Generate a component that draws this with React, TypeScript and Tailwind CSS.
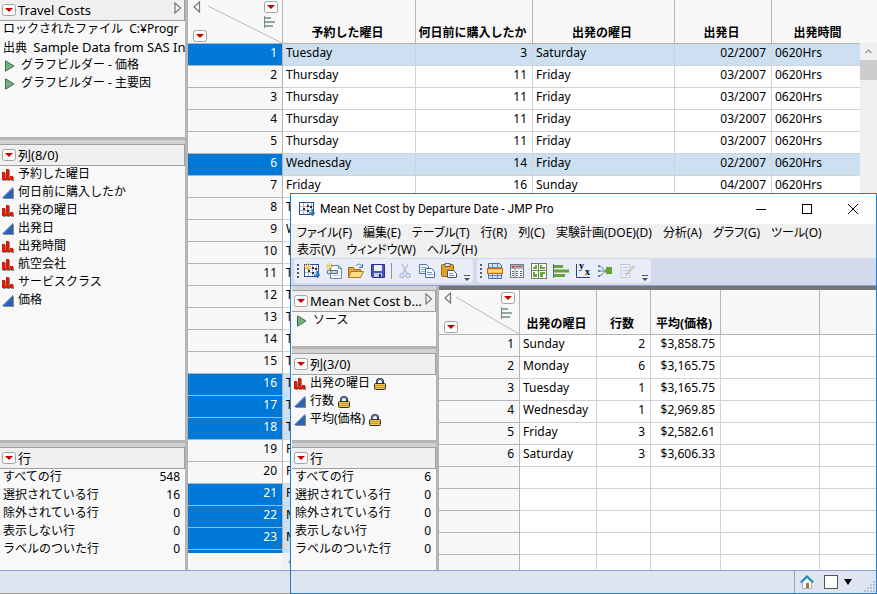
import { ReactNode } from "react";
import clsx from "clsx";

type Column = { name: string; kind: "nominal" | "continuous"; locked?: boolean };
type Stat = { label: string; value: number };

const tripColumns: Column[] = [
  { name: "予約した曜日", kind: "nominal" },
  { name: "何日前に購入したか", kind: "continuous" },
  { name: "出発の曜日", kind: "nominal" },
  { name: "出発日", kind: "continuous" },
  { name: "出発時間", kind: "nominal" },
  { name: "航空会社", kind: "nominal" },
  { name: "サービスクラス", kind: "nominal" },
  { name: "価格", kind: "continuous" },
];

const summaryColumns: Column[] = [
  { name: "出発の曜日", kind: "nominal", locked: true },
  { name: "行数", kind: "continuous", locked: true },
  { name: "平均(価格)", kind: "continuous", locked: true },
];

const tripStats: Stat[] = [
  { label: "すべての行", value: 548 },
  { label: "選択されている行", value: 16 },
  { label: "除外されている行", value: 0 },
  { label: "表示しない行", value: 0 },
  { label: "ラベルのついた行", value: 0 },
];

const summaryStats: Stat[] = [
  { label: "すべての行", value: 6 },
  { label: "選択されている行", value: 0 },
  { label: "除外されている行", value: 0 },
  { label: "表示しない行", value: 0 },
  { label: "ラベルのついた行", value: 0 },
];

const trips = [
  ["Tuesday", "3", "Saturday", "02/2007", "0620Hrs"],
  ["Thursday", "11", "Friday", "03/2007", "0620Hrs"],
  ["Thursday", "11", "Friday", "03/2007", "0620Hrs"],
  ["Thursday", "11", "Friday", "03/2007", "0620Hrs"],
  ["Thursday", "11", "Friday", "03/2007", "0620Hrs"],
  ["Wednesday", "14", "Friday", "02/2007", "0620Hrs"],
  ["Friday", "16", "Sunday", "04/2007", "0620Hrs"],
  ["Thursday"],
  ["Wednesday"],
  ["Thursday"],
  ["Thursday"],
  ["Thursday"],
  ["Thursday"],
  ["Thursday"],
  ["Thursday"],
  ["Thursday"],
  ["Thursday"],
  ["Thursday"],
  ["Friday"],
  ["Friday"],
  ["Friday"],
  ["Monday"],
  ["Monday"],
  [],
];
const selectedRows = [1, 6, 16, 17, 18, 21, 22, 23, 24];

const summary = [
  ["Sunday", "2", "$3,858.75"],
  ["Monday", "6", "$3,165.75"],
  ["Tuesday", "1", "$3,165.75"],
  ["Wednesday", "1", "$2,969.85"],
  ["Friday", "3", "$2,582.61"],
  ["Saturday", "3", "$3,606.33"],
  [],
  [],
  [],
  [],
  [],
];

const menus = [
  ["ファイル(F)", "編集(E)", "テーブル(T)", "行(R)", "列(C)", "実験計画(DOE)(D)", "分析(A)", "グラフ(G)", "ツール(O)"],
  ["表示(V)", "ウィンドウ(W)", "ヘルプ(H)"],
];

function RedMenu({ label }: { label: string }) {
  return (
    <button aria-label={label} className="block shrink-0">
      <svg width="14" height="12" viewBox="0 0 14 12">
        <rect x="0.5" y="0.5" width="13" height="11" rx="2" fill="#fbfbfb" stroke="#a3a3a3" />
        <path d="M3 4h8L7 8z" fill="#c80000" />
      </svg>
    </button>
  );
}

function Arrow({ side }: { side: "left" | "right" }) {
  return (
    <svg width="8" height="12" viewBox="0 0 8 12" className="shrink-0">
      <path d={side === "left" ? "M6.500 1v10L1 6z" : "M1 1v10l5.500-5z"} fill="#fafafa" stroke="#777" strokeWidth="1.200" />
    </svg>
  );
}

function Play() {
  return (
    <svg width="10" height="12" viewBox="0 0 10 12" className="mt-1 shrink-0">
      <path d="M.5.8v10.400L9 6z" fill="#76b082" stroke="#3f7048" />
    </svg>
  );
}

function KindIcon({ kind }: { kind: Column["kind"] }) {
  return (
    <svg width="12" height="12" viewBox="0 0 12 12" className="mt-1 shrink-0">
      {kind === "nominal" ? (
        <>
          <path d="M1 4h3v8H1zM5 1h3v11H5zM9 8h3v4H9z" fill="#8a8a8a" />
          <path d="M0 3h3v8H0zM4 0h3v11H4zM8 7h3v4H8z" fill="#d81e05" />
          <path d="M0 9h11v2H0z" fill="#d81e05" />
        </>
      ) : (
        <>
          <path d="M1 12h11V1z" fill="#8a8a8a" />
          <path d="M0 11h11V0z" fill="#2a62b4" />
          <path d="M1 10.500L11 .5" stroke="#6fa0dc" />
        </>
      )}
    </svg>
  );
}

function Lock() {
  return (
    <svg width="12" height="12" viewBox="0 0 12 12" className="mt-1 shrink-0">
      <path d="M3 6V3.500a3 2.500 0 0 1 6 0V6" fill="none" stroke="#22335c" strokeWidth="2" />
      <path d="M3.200 5V3.500a2.800 2.300 0 0 1 5.600 0" fill="none" stroke="#a9b6d0" strokeWidth="0.600" />
      <rect x="0.500" y="5.500" width="11" height="6" rx="1" fill="#f6c848" stroke="#2c2c38" />
      <path d="M1 7.500h10M1 9.500h10" stroke="#b8841c" strokeWidth="0.700" />
    </svg>
  );
}

function RowsIcon() {
  return (
    <svg width="12" height="12" viewBox="0 0 12 12" shapeRendering="crispEdges">
      <path d="M0 0h1v12H0z" fill="#7e8a9c" />
      <path d="M1 1h6v2H1zM1 5h10v2H1zM1 9h8v2H1z" fill="#90a898" />
    </svg>
  );
}

function PanelHeader({ title, arrow }: { title: string; arrow?: boolean }) {
  return (
    <div className="flex h-[22px] shrink-0 items-center border border-l-0 border-[#a0a0a0] bg-[#f0f0f0] pl-0.5 pr-0.5">
      <RedMenu label={`${title} メニュー`} />
      <h2 className="ml-0.5 grow whitespace-nowrap text-[13px] leading-5">{title}</h2>
      {arrow && (
        <button aria-label="パネルを閉じる" className="mb-1">
          <Arrow side="right" />
        </button>
      )}
    </div>
  );
}

function Splitter() {
  return <div className="h-[7px] shrink-0 border-t-[3px] border-[#b4b4b4] bg-[#d2d2d2]" />;
}

function ColumnList({ columns }: { columns: Column[] }) {
  return (
    <ul className="-mt-px">
      {columns.map((column) => (
        <li key={column.name} className="flex h-[18px] gap-1 pl-0.5 leading-[18px]">
          <KindIcon kind={column.kind} />
          <span className="whitespace-nowrap">{column.name}</span>
          {column.locked && <Lock />}
        </li>
      ))}
    </ul>
  );
}

function Stats({ stats }: { stats: Stat[] }) {
  return (
    <dl className="-mt-px">
      {stats.map((stat) => (
        <div key={stat.label} className="flex h-[18px] justify-between pl-[3px] pr-[5px] leading-[18px]">
          <dt>{stat.label}</dt>
          <dd>{stat.value}</dd>
        </div>
      ))}
    </dl>
  );
}

function Corner() {
  return (
    <div className="relative flex h-11 justify-between pb-px pl-[5px] pr-1 pt-0.5">
      <svg className="absolute inset-0 h-full w-full" viewBox="0 0 80 44" preserveAspectRatio="none">
        <path d="M17 7L80 44" stroke="#b8b8b8" vectorEffect="non-scaling-stroke" />
      </svg>
      <div className="relative flex flex-col justify-between">
        <Arrow side="left" />
        <RedMenu label="行メニュー" />
      </div>
      <div className="relative flex flex-col gap-[3px]">
        <RedMenu label="列メニュー" />
        <RowsIcon />
      </div>
    </div>
  );
}

type GridProps = {
  widths: string[];
  heads: string[];
  rows: string[][];
  right: number[];
  selected?: number[];
};

function DataGrid({ widths, heads, rows, right, selected = [] }: GridProps) {
  return (
    <table className="w-full table-fixed border-separate border-spacing-0">
      <colgroup>
        {widths.map((width, i) => (
          <col key={i} className={width} />
        ))}
      </colgroup>
      <thead>
        <tr className="bg-[#f7f7f7]">
          <td className="border-b border-r border-[#b4b4b4] p-0">
            <Corner />
          </td>
          {heads.map((head, i) => (
            <th
              key={i}
              className="whitespace-nowrap border-b border-r border-[#b4b4b4] p-0 pb-px pr-[3px] align-bottom font-bold leading-[18px] last:border-r-0 last:pl-[3px] last:pr-0"
            >
              {head}
            </th>
          ))}
        </tr>
      </thead>
      <tbody>
        {rows.map((row, i) => {
          const on = selected.includes(i + 1);
          const filled = row.length > 0;
          return (
            <tr key={i} className={on ? "bg-[#cce0f1]" : "bg-white"}>
              <th
                className={clsx(
                  "h-[22px] border-b border-r border-[#b4b4b4] p-0 pr-[5px] text-right align-top font-normal leading-[18px]",
                  on ? "bg-[#0078d7] text-white" : "bg-[#f7f7f7]"
                )}
              >
                {filled && i + 1}
              </th>
              {heads.map((_, c) => (
                <td
                  key={c}
                  className={clsx(
                    "h-[22px] whitespace-nowrap border-b border-r border-[#d2d2da] p-0 align-top leading-[18px] last:border-r-0",
                    right.includes(c) ? "pr-[5px] text-right" : "pl-[3px]"
                  )}
                >
                  {row[c]}
                </td>
              ))}
            </tr>
          );
        })}
      </tbody>
    </table>
  );
}

function Tool({ label, children }: { label: string; children: ReactNode }) {
  return (
    <button aria-label={label} className="flex w-[22px] items-center justify-center">
      <svg width="16" height="16" viewBox="0 0 16 16">
        {children}
      </svg>
    </button>
  );
}

function Grip() {
  return (
    <div className="flex items-center px-0.5">
      <svg width="3" height="16" viewBox="0 0 3 16" shapeRendering="crispEdges">
        <path d="M1 1h2v2H1zM1 5h2v2H1zM1 9h2v2H1zM1 13h2v2H1z" fill="#555b66" />
      </svg>
    </div>
  );
}

function More() {
  return (
    <button aria-label="その他のボタン" className="flex w-[13px] items-end justify-center pb-0.5">
      <svg width="6" height="6" viewBox="0 0 6 6">
        <path d="M0 0h6v1H0zM0 3h6L3 6z" fill="#555" />
      </svg>
    </button>
  );
}

function Star() {
  return (
    <>
      <path d="M3.500 0v7M0 3.500h7M1 1l5 5M6 1L1 6" stroke="#e9b82e" />
      <path d="M2.500 2.500h2v2h-2z" fill="#fff3a8" />
    </>
  );
}

function TableDrawing() {
  return (
    <>
      <rect x="0.5" y="1.500" width="14" height="12" fill="#fff" stroke="#2b4f94" />
      <path d="M4.500 2v11M8.500 2v11M12.500 2v11" stroke="#9eb6d2" />
      <path d="M1 5.500h13" stroke="#e0a0a0" />
      <path d="M1 9.500h13" stroke="#9eb6d2" />
      <path d="M4 7h2v2H4zM8 4h2v2H8zM8 9h2v2H8zM11 5h2v2h-2z" fill="#24303c" />
      <path d="M13.500 8v7M10 12h6" stroke="#2583bd" strokeWidth="1.500" />
    </>
  );
}

function ToolBar() {
  return (
    <div className="flex h-7 shrink-0 gap-1 border-b border-[#94a0cc] bg-[#d4daed] px-[3px] pb-0.5 pt-px">
      <div className="flex items-stretch rounded bg-[#e9edf8]">
        <Grip />
        <Tool label="新規データテーブル">
          <TableDrawing />
          <Star />
        </Tool>
        <Tool label="新規スクリプト">
          <path d="M4.500 2.500h8l3 3v10h-11z" fill="#f6f9fd" stroke="#6a88a8" />
          <path d="M12.500 2.500v3h3" fill="none" stroke="#6a88a8" />
          <path d="M2 7.500h9.500v3H2z" fill="#c4d3e2" stroke="#56708c" />
          <path d="M6.500 12.500h7" stroke="#b4c6da" />
          <circle cx="3" cy="9" r="2" fill="#dfe8f1" stroke="#56708c" />
          <Star />
        </Tool>
        <Tool label="開く">
          <path d="M.5 14.500v-10h5l1 2h6v8z" fill="#e3a73a" stroke="#9c6c1a" />
          <path d="M3 8.500h12.500l-3 6H.5z" fill="#ffdd84" stroke="#a97820" />
          <path d="M8 3c2-3 5-2 6 1M14.500 1v3.500H11" fill="none" stroke="#4d78ac" />
        </Tool>
        <Tool label="保存">
          <path d="M1.500 1.500h13v13h-12l-1-1z" fill="#4a55c4" stroke="#272f8c" />
          <path d="M4 2h8v6H4z" fill="#eef1fb" />
          <path d="M4 10h8v4H4z" fill="#c6cbe4" />
          <path d="M9 11h2v3H9z" fill="#272f8c" />
        </Tool>
        <div className="mx-0.5 my-1 w-px bg-[#8c94a8]" />
        <Tool label="切り取り">
          <path d="M5 1l5 9.500M11 1L6 10.500" stroke="#b4bfce" strokeWidth="1.500" />
          <circle cx="5" cy="12.500" r="2" fill="none" stroke="#b0c0dc" strokeWidth="1.500" />
          <circle cx="11" cy="12.500" r="2" fill="none" stroke="#b0c0dc" strokeWidth="1.500" />
        </Tool>
        <Tool label="コピー">
          <path d="M.5 1.500h7l2 2v7h-9z" fill="#eef4fd" stroke="#4a74b8" />
          <path d="M2 4.500h5M2 6.500h5M2 8.500h4" stroke="#8eaedc" />
          <path d="M6.500 5.500h6l3 3v6h-9z" fill="#fff" stroke="#3c66ae" />
          <path d="M8 9.500h5M8 11.500h6" stroke="#6d95d2" />
        </Tool>
        <Tool label="貼り付け">
          <rect x="0.500" y="1.500" width="12" height="12" rx="1" fill="#e3a126" stroke="#94640e" />
          <path d="M4 .5h5v3H4z" fill="#dde2ec" stroke="#686868" />
          <path d="M6.500 7.500h6l3 3v4h-9z" fill="#fff" stroke="#3c5684" />
          <path d="M8 10.500h4M8 12.500h6" stroke="#7894c0" />
        </Tool>
        <More />
      </div>
      <div className="flex items-stretch rounded bg-[#e9edf8]">
        <Grip />
        <Tool label="データフィルタ">
          <path d="M1.500 .5h11l2 2v13h-13z" fill="#d5e4f6" stroke="#466eae" />
          <path d="M2 4.500h12M5.500 1v14M10.500 1v14M2 12.500h12" stroke="#5f8acb" />
          <rect x="0.500" y="5.500" width="15" height="5" fill="#ffc54c" stroke="#dc5f19" />
          <path d="M2 8h12" stroke="#ffe08c" strokeWidth="1.500" />
        </Tool>
        <Tool label="表の作成">
          <rect x="1.500" y="1.500" width="13" height="13" fill="#f8f8f8" stroke="#747c88" />
          <path d="M2 2h12v4H2z" fill="#adb3bb" />
          <path d="M3 3h2v2H3zM7 3h6v1H7z" fill="#d54334" />
          <path
            d="M3 8h2v1H3zM7 8h2v1H7zM11 8h2v1h-2zM3 10h2v1H3zM7 10h2v1H7zM11 10h2v1h-2zM3 12h2v1H3zM7 12h2v1H7zM11 12h2v1h-2z"
            fill="#58667a"
          />
          <path d="M6 2v12" stroke="#8c95a3" />
        </Tool>
        <Tool label="分割表示">
          <rect x="0.500" y="0.500" width="15" height="15" fill="#fff" stroke="#6f7b6b" />
          <path d="M7.500 1v14M1 7.500h14" stroke="#6f7b6b" />
          <path d="M4 2h2v4H2V4h2zM9 2h2v2h3v2H9zM2 9h2v2h2v3H2zM9 9h5v2h-2v3H9z" fill="#6aa834" />
        </Tool>
        <Tool label="グラフビルダー">
          <path d="M.5 1v14" stroke="#59687c" />
          <path d="M1 2h9v3H1zM1 6.500h15v3H1zM1 11h11v3H1z" fill="#65a337" />
        </Tool>
        <Tool label="二変量の関係">
          <path d="M1.500 1v13.500H15" fill="none" stroke="#244576" />
          <text x="4" y="6" className="font-['Liberation_Serif'] text-[10px] font-bold">
            y
          </text>
          <text x="10" y="12" className="font-['Liberation_Serif'] text-[10px] font-bold">
            x
          </text>
        </Tool>
        <Tool label="モデルのあてはめ">
          <path d="M2 3c4 0 4 5 8 5M2 8h8M2 13c4 0 4-5 8-5" fill="none" stroke="#6580a2" />
          <path d="M1 2h2v2H1zM1 7h2v2H1zM1 12h2v2H1z" fill="#6b83a2" />
          <path d="M9 4h6v7H9z" fill="#63a432" />
        </Tool>
        <Tool label="編集">
          <path d="M2 1.500h9v13H2z" fill="#edf0f7" stroke="#c1c8d8" />
          <path d="M4 4.500h5M4 7.500h5M4 10.500h3" stroke="#c1c8d8" />
          <path d="M15 3l-7 8" stroke="#d6ccc8" strokeWidth="3" />
          <path d="M8.500 10.500L6.500 13" stroke="#9ea6b8" />
        </Tool>
        <More />
      </div>
    </div>
  );
}

function SummaryWindow() {
  return (
    <section className="absolute bottom-0 left-[290px] right-0 top-[193px] flex flex-col border border-[#1c80d0] bg-white">
      <header className="flex h-[30px] shrink-0 items-center pl-2">
        <svg width="16" height="16" viewBox="0 0 16 16" className="mr-[5px]">
          <TableDrawing />
        </svg>
        <h1 className="grow whitespace-nowrap font-['Roboto',sans-serif] text-[12px]">
          Mean Net Cost by Departure Date - JMP Pro
        </h1>
        <button aria-label="最小化" className="flex w-[46px] justify-center">
          <svg width="10" height="10" viewBox="0 0 10 10">
            <path d="M0 5.500h10" stroke="#000" />
          </svg>
        </button>
        <button aria-label="最大化" className="flex w-[46px] justify-center">
          <svg width="10" height="10" viewBox="0 0 10 10">
            <rect x="0.500" y="0.500" width="9" height="9" fill="none" stroke="#000" />
          </svg>
        </button>
        <button aria-label="閉じる" className="flex w-[46px] justify-center">
          <svg width="10" height="10" viewBox="0 0 10 10">
            <path d="M0 0l10 10M10 0L0 10" stroke="#000" />
          </svg>
        </button>
      </header>

      <nav className="h-[34px] shrink-0 bg-[#f0f0f0] pl-1.5 [font-feature-settings:'palt']">
        {menus.map((line, i) => (
          <div key={i} className="flex gap-[11px]">
            {line.map((item) => (
              <button key={item} className="whitespace-nowrap leading-[17px]">
                {item}
              </button>
            ))}
          </div>
        ))}
      </nav>

      <ToolBar />

      <div className="flex min-h-0 grow">
        <aside className="flex w-[148px] shrink-0 flex-col border-r-[3px] border-[#b4b4b4] bg-[#f8f8f8] pl-px">
          <div className="h-1 shrink-0 bg-[#d2d2d2]" />
          <PanelHeader title="Mean Net Cost b…" arrow />
          <div className="h-[34px] shrink-0">
            <button className="-mt-px flex h-[18px] gap-1.5 pl-[5px] leading-[18px]">
              <Play />
              ソース
            </button>
          </div>
          <Splitter />
          <PanelHeader title="列(3/0)" />
          <div className="h-[65px] shrink-0">
            <ColumnList columns={summaryColumns} />
          </div>
          <Splitter />
          <PanelHeader title="行" />
          <Stats stats={summaryStats} />
        </aside>
        <div className="min-w-0 grow overflow-hidden border-t-4 border-[#767676]">
          <DataGrid
            widths={["w-[81px]", "w-[77px]", "w-[54px]", "w-[70px]", "w-[99px]", "w-auto"]}
            heads={["出発の曜日", "行数", "平均(価格)", "", ""]}
            rows={summary}
            right={[1, 2]}
          />
        </div>
      </div>

      <footer className="flex h-[23px] shrink-0 justify-end border-t border-[#94a0cc] bg-[#dfe5f0]">
        <div className="flex items-center border-l border-[#94a0b8] pl-[5px]">
          <button aria-label="ホーム" className="mr-2.5">
            <svg width="14" height="14" viewBox="0 0 14 14">
              <path d="M2.500 7v6.500h9V7L7 2.500z" fill="#fff" stroke="#9bb0c2" />
              <path d="M.8 7.500L7 1.500l6.200 6" fill="none" stroke="#2487bf" strokeWidth="2" />
              <path d="M6 8h3v5H6z" fill="#a87824" />
            </svg>
          </button>
          <input
            type="checkbox"
            aria-label="ウィンドウを選択"
            className="mr-1 h-3.5 w-3.5 appearance-none border border-[#555] bg-white"
          />
          <button aria-label="ウィンドウの一覧" className="mr-2.5 px-0.5">
            <svg width="8" height="6" viewBox="0 0 8 6">
              <path d="M0 0h8L4 6z" fill="#000" />
            </svg>
          </button>
          <svg width="12" height="12" viewBox="0 0 12 12" className="self-end" shapeRendering="crispEdges">
            <path
              d="M9 0h2v2H9zM6 3h2v2H6zM9 3h2v2H9zM3 6h2v2H3zM6 6h2v2H6zM9 6h2v2H9zM0 9h2v2H0zM3 9h2v2H3zM6 9h2v2H6zM9 9h2v2H9z"
              fill="#bcc2d0"
            />
          </svg>
        </div>
      </footer>
    </section>
  );
}

export default function App() {
  return (
    <main className="relative flex h-screen flex-col overflow-hidden bg-[#f7f7f7] font-['Noto_Sans','Noto_Sans_CJK_JP',sans-serif] text-[12px] text-black">
      <div className="flex min-h-0 grow">
        <aside className="flex w-[188px] shrink-0 flex-col border-r-[3px] border-[#b4b4b4] bg-[#f8f8f8]">
          <div className="-mt-px shrink-0">
            <PanelHeader title="Travel Costs" arrow />
          </div>
          <div className="h-[116px] shrink-0 overflow-hidden leading-[18px]">
            <div className="-mt-px">
              <p className="whitespace-pre pl-[3px]">ロックされたファイル  C:¥Progr</p>
              <p className="h-[18px] whitespace-pre pl-[3px]">
                出典  <span className="text-[13px]">Sample Data from SAS In</span>
              </p>
              <button className="flex h-[18px] gap-1.5 pl-[5px]">
                <Play />
                グラフビルダー - 価格
              </button>
              <button className="flex h-[18px] gap-1.5 pl-[5px]">
                <Play />
                グラフビルダー - 主要因
              </button>
            </div>
          </div>
          <Splitter />
          <PanelHeader title="列(8/0)" />
          <div className="min-h-0 grow overflow-hidden">
            <ColumnList columns={tripColumns} />
          </div>
          <Splitter />
          <PanelHeader title="行" />
          <div className="h-[101px] shrink-0">
            <Stats stats={tripStats} />
          </div>
        </aside>

        <div className="flex min-w-0 grow flex-col">
          <div className="flex min-h-0 grow overflow-hidden">
            <div className="-mt-px min-w-0 grow">
              <DataGrid
                widths={["w-[95px]", "w-[133px]", "w-[117px]", "w-[142px]", "w-[97px]", "w-auto"]}
                heads={["予約した曜日", "何日前に購入したか", "出発の曜日", "出発日", "出発時間"]}
                rows={trips}
                right={[1, 3]}
                selected={selectedRows}
              />
            </div>
            <div className="flex w-[17px] shrink-0 flex-col pt-[43px]">
              <div className="grow bg-[#f0f0f0]">
                <svg width="17" height="17" viewBox="0 0 17 17">
                  <path d="M5.500 10l3-3 3 3" fill="none" stroke="#a0a0a0" strokeWidth="1.500" />
                </svg>
                <div className="h-5 bg-[#cdcdcd]" />
              </div>
            </div>
          </div>
          <div className="flex h-[17px] shrink-0">
            <div className="w-[94px] bg-[#f7f7f7]" />
            <div className="flex grow items-center bg-[#f0f0f0] pl-1.5">
              <svg width="5" height="8" viewBox="0 0 5 8">
                <path d="M4 1L1 4l3 3" fill="none" stroke="#a0a0a0" strokeWidth="1.500" />
              </svg>
            </div>
          </div>
        </div>
      </div>
      <footer className="h-6 shrink-0 border-b border-t border-b-[#a0a0a0] border-t-[#94a0cc] bg-[#dfe5f0]" />
      <SummaryWindow />
    </main>
  );
}
